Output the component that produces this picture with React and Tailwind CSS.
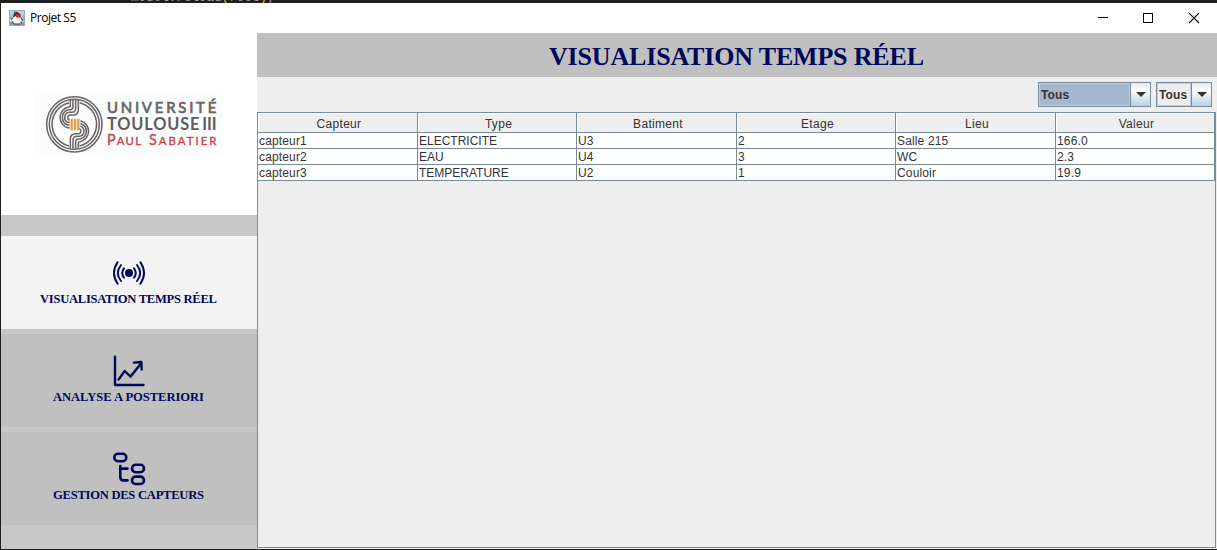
import React from "react";

const columns = ["Capteur", "Type", "Batiment", "Etage", "Lieu", "Valeur"];
const rows = [
  ["capteur1", "ELECTRICITE", "U3", "2", "Salle 215", "166.0"],
  ["capteur2", "EAU", "U4", "3", "WC", "2.3"],
  ["capteur3", "TEMPERATURE", "U2", "1", "Couloir", "19.9"],
];

const gridCols = "grid grid-cols-[160px_159px_160px_159px_160px_159px]";

function DukeIcon() {
  return (
    <svg width="16" height="16" viewBox="0 0 16 16" className="block">
      <defs>
        <linearGradient id="duke" x1="0" y1="0" x2="0" y2="1">
          <stop offset="0" stopColor="#c9d5e2" />
          <stop offset="1" stopColor="#8599ae" />
        </linearGradient>
      </defs>
      <rect x="0.5" y="0.5" width="15" height="15" fill="url(#duke)" stroke="#9aa9b8" />
      <path d="M6 2.5 L3.5 8.5 L1 9.5 L1.5 11.5 L4 11 L4 14 L12 14 L12.5 11.5 L14.8 11.5 L14 8.8 L11.5 7.5 Z" fill="#f0f1f2" />
      <path d="M5.5 1.5 L3.8 7.5 L7 6 L11.5 8 L11.3 4 L8.5 2 Z" fill="#3a3d42" />
      <path d="M2 9.2 L4 8 M12 8.2 L14 10.5 M3.8 11.5 L4.2 14 M12.2 11.5 L12 14 M5 14 H11" stroke="#3c4046" strokeWidth="1.2" />
      <circle cx="8.6" cy="5.8" r="1.9" fill="#dc2a22" />
    </svg>
  );
}

function UniversityLogo() {
  return (
    <svg width="188" height="63" viewBox="14 24 564 189" className="block">
      <rect x="14" y="24" width="564" height="189" fill="#fafdfc" />
      <g fill="none" stroke="#6b6365" strokeWidth="4.6">
        <circle cx="132" cy="118" r="83" />
        <circle cx="132" cy="118" r="75" />
        <path d="M116 53 A67 67 0 0 0 116 183" />
        <path d="M148 183 A67 67 0 0 0 148 53" />
        <path d="M120 45 V62 Q120 66 115 66 A32 32 0 0 0 112 128 H118" />
        <path d="M128 45 V66 Q128 74 119 74 H115 A24 24 0 0 0 112 120 H118" />
        <path d="M136 45 V70 Q136 82 124 82 H116 A16 16 0 0 0 112 112 H118" />
        <path d="M144 45 V74 Q144 90 128 90 H118 A8 8 0 0 0 115 104 H118" />
        <path d="M144 191 V174 Q144 170 149 170 A32 32 0 0 0 152 108 H150" />
        <path d="M136 191 V170 Q136 162 145 162 H149 A24 24 0 0 0 152 116 H150" />
        <path d="M128 191 V166 Q128 154 140 154 H148 A16 16 0 0 0 152 124 H150" />
        <path d="M120 191 V162 Q120 146 136 146 H146 A8 8 0 0 0 149 132 H150" />
      </g>
      <path d="M124 101 V136 M134 101 V136 M144 101 V136" stroke="#f39a3c" strokeWidth="7" />
      <g fontFamily="Lato, sans-serif">
        <text x="230" y="84" fontSize="45" stroke="#6b6365" strokeWidth="2" textLength="328" fill="#6b6365">UNIVERSITÉ</text>
        <text x="230" y="135" fontSize="49" fontWeight="700" textLength="277" fill="#625b5d">TOULOUSE</text>
        <text x="516" y="135" fontSize="49" fontWeight="700" textLength="43" fill="#625b5d">III</text>
        <text x="230" y="181" fontSize="43" fill="#cb4149" stroke="#cb4149" strokeWidth="1" textLength="102">P<tspan fontSize="34">AUL</tspan></text>
        <text x="356" y="181" fontSize="43" fill="#cb4149" stroke="#cb4149" strokeWidth="1" textLength="202">S<tspan fontSize="34">ABATIER</tspan></text>
      </g>
    </svg>
  );
}

function SignalIcon() {
  return (
    <svg width="34" height="26" viewBox="0 0 34 26" fill="none" stroke="#00085a" strokeWidth="2" strokeLinecap="round" className="block">
      <circle cx="17" cy="13" r="4" fill="#00085a" stroke="none" />
      <path d="M12 8.3 Q8.4 13 12 17.7 M22 8.3 Q25.6 13 22 17.7" />
      <path d="M9 5 Q2.6 13 9 21 M25 5 Q31.4 13 25 21" />
      <path d="M5.6 2.3 Q-1.6 13 5.6 23.7 M28.4 2.3 Q35.6 13 28.4 23.7" />
    </svg>
  );
}

function ChartIcon() {
  return (
    <svg width="34" height="34" viewBox="0 0 34 34" fill="none" stroke="#00085a" strokeWidth="2.4" strokeLinecap="round" strokeLinejoin="round" className="block">
      <path d="M3 2.7 V31 H31.5" />
      <path d="M6.5 25.6 L12.7 17 L18.6 22.6 L29 9.5" />
      <path d="M22 8.6 L29.3 8 L29.7 15.6" />
    </svg>
  );
}

function TreeIcon() {
  return (
    <svg width="34" height="34" viewBox="0 0 34 34" fill="none" stroke="#00085a" strokeWidth="2.6" strokeLinecap="round" className="block">
      <rect x="2.3" y="1.8" width="12" height="7.4" rx="3.6" />
      <rect x="20" y="12.8" width="12" height="7.4" rx="3.6" />
      <rect x="20" y="24.6" width="12" height="7.4" rx="3.6" />
      <path d="M8.3 14 V25 Q8.3 28.4 11.5 28.4 H15.5 M8.3 16.6 H15.5" />
    </svg>
  );
}

function NavItem({ icon, label, active, width }) {
  return (
    <div className={`flex h-[93px] shrink-0 flex-col items-center pt-5 pr-px ${active ? "bg-[#f3f3f3]" : "bg-[#c0c0c0]"}`}>
      <div className="flex h-[34px] items-center">{icon}</div>
      <svg width={width} height="18" className="block overflow-visible">
        <text x="0" y="13" fontFamily="Liberation Serif, serif" fontWeight="700" fontSize="12.6" fill="#00085a" textLength={width}>
          {label}
        </text>
      </svg>
    </div>
  );
}

function Combo({ selected, children }) {
  return (
    <div className={`flex h-[25px] border border-[#7a8a99] ${selected ? "w-[113px]" : "w-14"}`}>
      <div className={`flex flex-1 items-center border border-[#b8cfe5] pl-px text-[12px] leading-none font-bold tracking-[0.1px] text-[#333333] ${selected ? "bg-[#a3b8cc]" : "bg-[#eeeeee]"}`}>
        {children}
      </div>
      <div className="flex w-5 items-center justify-center border-l border-[#7a8a99] bg-linear-to-b from-[#dde8f3] via-white via-30% to-[#b8cfe5]">
        <svg width="10" height="5" viewBox="0 0 10 5" className="block">
          <path d="M0 0 H10 L5 5 Z" fill="#333333" />
        </svg>
      </div>
    </div>
  );
}

export default function App() {
  return (
    <div className="flex h-[550px] w-[1217px] flex-col overflow-hidden bg-[#1e1e20] pl-px font-['Liberation_Sans',sans-serif] text-[#333333]">
      <div className="flex h-[3px] shrink-0 items-end overflow-hidden pl-[130px]">
        <div className="h-[3px] font-['Liberation_Mono',monospace] text-[12.6px] leading-[3px] whitespace-pre text-[#9c9c9c]">
          <div className="-mt-[3px]">model.reload<span className="text-[#d9c21c]">(</span>root<span className="text-[#d9c21c]">)</span>;</div>
        </div>
      </div>

      <header className="flex h-[30px] shrink-0 items-center bg-white pl-2">
        <DukeIcon />
        <span className="ml-[5px] font-['Open_Sans',sans-serif] text-[12px] tracking-[-0.45px] text-black">Projet S5</span>
        <div className="ml-auto flex items-center gap-[35px] pr-[17px]">
          <svg width="11" height="11" className="block" shapeRendering="crispEdges"><path d="M1 4.5 H11" stroke="#000" /></svg>
          <svg width="11" height="11" className="block" shapeRendering="crispEdges"><rect x="0.5" y="0.5" width="9" height="9" fill="none" stroke="#000" /></svg>
          <svg width="11" height="11" className="block"><path d="M0 0 L10 10 M10 0 L0 10" stroke="#000" strokeWidth="1.1" /></svg>
        </div>
      </header>

      <div className="flex h-[516px] shrink-0">
        <aside className="flex w-64 shrink-0 flex-col bg-[#c8c8c8]">
          <div className="mb-[21px] flex h-[182px] shrink-0 justify-center bg-white pt-[60px] pr-px">
            <UniversityLogo />
          </div>
          <nav className="flex flex-col gap-[5px]">
            <NavItem active icon={<SignalIcon />} label="VISUALISATION TEMPS RÉEL" width={177} />
            <NavItem icon={<ChartIcon />} label="ANALYSE A POSTERIORI" width={151} />
            <NavItem icon={<TreeIcon />} label="GESTION DES CAPTEURS" width={151} />
          </nav>
        </aside>

        <main className="flex w-[960px] flex-col bg-[#eeeeee]">
          <div className="flex h-11 shrink-0 justify-center bg-[#c0c0c0] pr-0.5">
            <svg width="375" height="44" className="block overflow-visible">
              <text x="0" y="32" fontFamily="Liberation Serif, serif" fontWeight="700" fontSize="26" fill="#00085a" textLength="375">
                VISUALISATION TEMPS RÉEL
              </text>
            </svg>
          </div>
          <div className="flex h-[35px] shrink-0 justify-end gap-[5px] pt-[5px] pr-[5px]">
            <Combo selected>Tous</Combo>
            <Combo>Tous</Combo>
          </div>
          <div className="mr-px mb-px flex-1 border border-[#7a8a99] text-[12px]">
            <div className={gridCols}>
              {columns.map((c) => (
                <div key={c} className="flex h-5 items-center justify-center border-r border-b border-[#7a8a99] pt-0.5 pl-[3px] shadow-[inset_1px_1px_0_#ffffff]">
                  <span className="tracking-[0.3px]">{c}</span>
                </div>
              ))}
            </div>
            {rows.map((r) => (
              <div key={r[0]} className={gridCols}>
                {r.map((v, i) => (
                  <div key={i} className="flex h-4 items-center border-r border-b border-[#7a8a99] bg-white pl-px leading-none">
                    <span className={i === 0 || i > 3 ? "tracking-[0.15px]" : ""}>{v}</span>
                  </div>
                ))}
              </div>
            ))}
          </div>
        </main>
      </div>
    </div>
  );
}
